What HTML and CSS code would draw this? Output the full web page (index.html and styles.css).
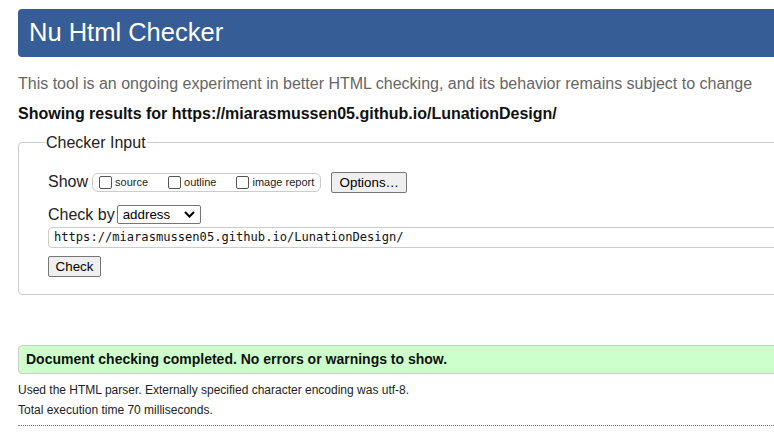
FILE: index.html
```html
<!DOCTYPE html>
<html>
<head>
<meta charset="utf-8">
<link rel="stylesheet" href="styles.css">
</head>
<body>
<div class="page">
  <h1 class="banner">Nu Html Checker</h1>
  <p class="intro">This tool is an ongoing experiment in better HTML checking, and its behavior remains subject to change</p>
  <p class="results-for">Showing results for https://miarasmussen05.github.io/LunationDesign/</p>
  <fieldset class="checker">
    <legend class="checker-legend">Checker Input</legend>
    <div class="show-row">
      <span class="label-lg">Show</span>
      <span class="show-group">
        <label class="opt"><span class="cb"></span>source</label>
        <label class="opt"><span class="cb"></span>outline</label>
        <label class="opt"><span class="cb"></span>image report</label>
      </span>
      <span class="btn btn-options">Options…</span>
    </div>
    <div class="by-row">
      <span class="label-lg">Check by</span>
      <span class="select">address
        <svg class="chev" width="11" height="7" viewBox="0 0 11 7"><path d="M1 1 L5.5 5.5 L10 1" fill="none" stroke="#000" stroke-width="2"/></svg>
      </span>
    </div>
    <div class="url-input">https://miarasmussen05.github.io/LunationDesign/</div>
    <div class="check-row"><span class="btn btn-check">Check</span></div>
  </fieldset>
  <div class="success">Document checking completed. No errors or warnings to show.</div>
  <p class="details">Used the HTML parser. Externally specified character encoding was utf-8.</p>
  <p class="details">Total execution time 70 milliseconds.</p>
  <div class="dotted"></div>
</div>
</body>
</html>
```
FILE: styles.css
```css
html, body {
  margin: 0;
  padding: 0;
  background: #fff;
  overflow: hidden;
}
body {
  font-family: "Liberation Sans", Arial, sans-serif;
  color: #000;
}
.page {
  width: 900px;
  padding: 9px 0 0 18px;
}
.banner {
  margin: 0;
  height: 48px;
  line-height: 46px;
  padding-left: 11px;
  font-size: 25.5px;
  font-weight: normal;
  color: #fff;
  background: #365d95;
  border-radius: 4px;
}
.intro {
  margin: 17px 0 0 0;
  font-size: 16px;
  line-height: 19px;
  color: #666;
}
.results-for {
  margin: 11px 0 0 0;
  font-size: 16px;
  line-height: 19px;
  font-weight: bold;
  color: #111;
}
.checker {
  margin: 10px 0 0 0;
  padding: 18px 29px 17px 29px;
  border: 1px solid #ccc;
  border-radius: 4px;
  min-width: 0;
}
.checker-legend {
  padding: 0 1px;
  margin-left: -3px;
  font-size: 16px;
  line-height: 19px;
  color: #222;
}
.show-row {
  display: flex;
  align-items: center;
  height: 24px;
}
.label-lg {
  font-size: 16px;
  color: #222;
}
.show-group {
  display: flex;
  align-items: center;
  margin-left: 4px;
  height: 17px;
  padding: 0 6px 0 2px;
  border: 1px solid #ccc;
  border-radius: 6px;
}
.opt {
  display: flex;
  align-items: center;
  font-size: 11px;
  color: #222;
  margin-right: 16px;
}
.opt:last-child {
  margin-right: 0;
}
.cb {
  display: inline-block;
  box-sizing: border-box;
  width: 13px;
  height: 13px;
  border: 1px solid #555;
  border-radius: 2px;
  margin: 0 3px 0 4px;
}
.btn {
  display: inline-flex;
  align-items: center;
  justify-content: center;
  box-sizing: border-box;
  font-size: 13.33px;
  color: #000;
  background: #efefef;
  border: 1px solid #767676;
  border-radius: 2px;
}
.btn-options {
  margin-left: 10px;
  width: 76px;
  height: 21px;
}
.by-row {
  display: flex;
  align-items: center;
  margin-top: 10px;
  height: 21px;
}
.select {
  display: inline-flex;
  align-items: center;
  justify-content: space-between;
  box-sizing: border-box;
  margin-left: 2px;
  width: 84px;
  height: 19px;
  padding: 0 5px 0 5px;
  font-size: 13.33px;
  border: 1px solid #767676;
  border-radius: 2px;
  background: #fff;
}
.url-input {
  box-sizing: border-box;
  margin-top: 2px;
  height: 21px;
  line-height: 19px;
  padding-left: 5px;
  font-family: "DejaVu Sans Mono", "Liberation Mono", monospace;
  font-size: 12.1px;
  color: #111;
  border: 1px solid #ccc;
  border-radius: 4px;
  width: 860px;
}
.check-row {
  margin-top: 8px;
}
.btn-check {
  width: 53px;
  height: 21px;
}
.success {
  margin-top: 50px;
  box-sizing: border-box;
  height: 29px;
  line-height: 27px;
  padding-left: 7px;
  font-size: 14px;
  font-weight: bold;
  color: #111;
  background: #ccffcc;
  border: 1px solid #ccc;
  border-radius: 4px;
}
.details {
  margin: 10px 0 0 0;
  font-size: 12px;
  line-height: 13px;
  color: #222;
}
.details + .details {
  margin-top: 7px;
}
.dotted {
  margin-top: 8px;
  border-top: 1px dotted #777;
}
```
